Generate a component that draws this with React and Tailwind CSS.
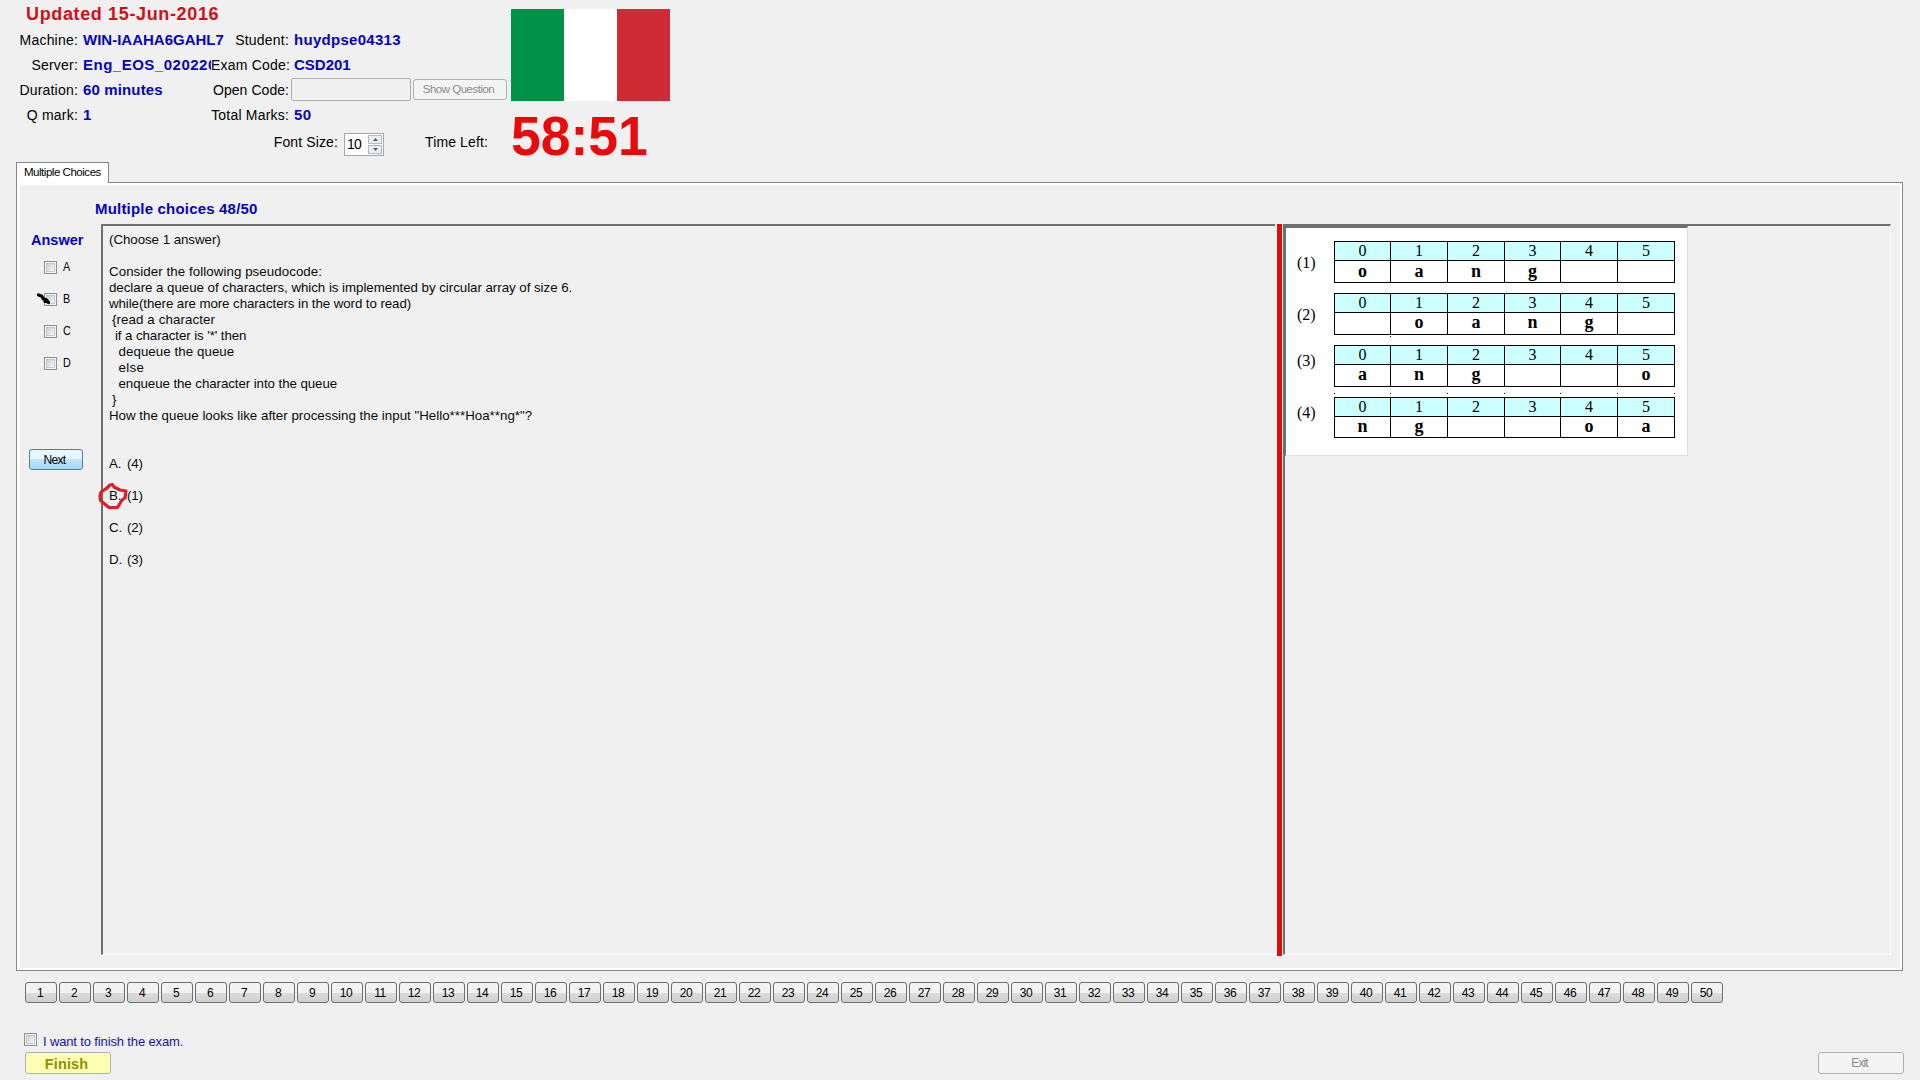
const INFO = [
  [
    { label: "Machine:", value: "WIN-IAAHA6GAHL7" },
    { label: "Student:", value: "huydpse04313", cls: "tracking-[0.28px]" },
  ],
  [
    { label: "Server:", value: "Eng_EOS_020220", cls: "tracking-[0.5px] overflow-hidden" },
    { label: "Exam Code:", value: "CSD201", labelCls: "tracking-[-0.08px]" },
  ],
  [
    { label: "Duration:", value: "60 minutes", cls: "tracking-[0.14px]" },
    { label: "Open Code:", input: true, labelCls: "tracking-[0.05px]" },
  ],
  [
    { label: "Q mark:", value: "1" },
    { label: "Total Marks:", value: "50", cls: "tracking-[0.4px]" },
  ],
];

const QUESTION = [
  ["(Choose 1 answer)", "tracking-[-0.04px]"],
  ["", ""],
  ["Consider the following pseudocode:", "tracking-[0.07px]"],
  ["declare a queue of characters, which is implemented by circular array of size 6.", "tracking-[-0.03px]"],
  ["while(there are more characters in the word to read)", "tracking-[-0.075px]"],
  ["{read a character", "tracking-[0.1px] pl-[3px]"],
  ["if a character is '*' then", "tracking-[-0.09px] pl-[6px]"],
  ["dequeue the queue", "tracking-[0.07px] pl-[9.5px]"],
  ["else", "tracking-[0.3px] pl-[9.5px]"],
  ["enqueue the character into the queue", "tracking-[-0.07px] pl-[9.5px]"],
  ["}", "pl-[3px]"],
  ["How the queue looks like after processing the input \"Hello***Hoa**ng*\"?", "tracking-[0.018px]"],
];

const OPTIONS = [
  ["A.", "(4)"],
  ["B.", "(1)"],
  ["C.", "(2)"],
  ["D.", "(3)"],
];

const ARRAYS = [
  { name: "(1)", cells: ["o", "a", "n", "g", "", ""], head: "h-[19px]", body: "h-[22px]", pos: "pt-[13px]" },
  { name: "(2)", cells: ["", "o", "a", "n", "g", ""], head: "h-[18px]", body: "h-[23px]", pos: "pt-[13px]" },
  { name: "(3)", cells: ["a", "n", "g", "", "", "o"], head: "h-[18px]", body: "h-[23px]", pos: "pt-[7px]" },
  { name: "(4)", cells: ["n", "g", "", "", "o", "a"], head: "h-[18px]", body: "h-[22px]", pos: "pt-[7px]" },
];

const COLS = "grid grid-cols-[56px_57px_57px_56px_57px_57px]";

function CheckBox() {
  return (
    <span className="block h-[13px] w-[13px] shrink-0 border border-[#8e8f8f] bg-[#f4f4f4] p-px">
      <span className="block h-full w-full border border-[#c3c6ca] bg-linear-to-br from-[#cdd0d5] to-[#f6f6f6]" />
    </span>
  );
}

function Field({ item, labelW, valueW }) {
  return (
    <>
      <div className={`${labelW} shrink-0 text-right text-[14px] whitespace-pre text-black tracking-[0.2px] ${item.labelCls || ""}`}>
        {item.label}
      </div>
      {item.input ? (
        <div className="ml-[2px] flex items-center gap-[2px]">
          <div className="h-[23px] w-[120px] rounded-[2px] border border-[#afafaf]" />
          <button className="h-[21px] w-[94px] rounded-[3px] border border-[#adb2b5] bg-[#f4f4f4] pr-[3px] text-[11.5px] leading-[19px] tracking-[-0.5px] whitespace-pre text-[#8b8b8b]">
            Show Question
          </button>
        </div>
      ) : (
        <div className={`${valueW} shrink-0 pl-[5px] text-[15px] font-bold whitespace-pre text-[#0505ba] ${item.cls || ""}`}>
          {item.value}
        </div>
      )}
    </>
  );
}

function Spinner() {
  return (
    <div className="flex h-[23px] w-[40px] border border-[#a5a8ab] bg-white p-px">
      <span className="w-[22px] pl-px text-[14px] leading-[18px] tracking-[-0.8px]">10</span>
      <span className="flex w-[14px] flex-col">
        <span className="flex h-[9px] items-center justify-center border border-[#b3b9c2] bg-[#e9ecf1]">
          <svg width="5" height="3" viewBox="0 0 5 3"><path d="M0 3 2.5 0 5 3Z" fill="#4a5a80" /></svg>
        </span>
        <span className="mt-px flex h-[9px] items-center justify-center border border-[#b3b9c2] bg-[#e9ecf1]">
          <svg width="5" height="3" viewBox="0 0 5 3"><path d="M0 0 2.5 3 5 0Z" fill="#4a5a80" /></svg>
        </span>
      </span>
    </div>
  );
}

function Header() {
  return (
    <header className="flex h-[162px] shrink-0">
      <div className="w-[511px] shrink-0">
        <h1 className="h-[27px] pl-[26px] text-[18px] leading-7 font-bold tracking-[0.64px] whitespace-pre text-[#d00f16]">
          Updated 15-Jun-2016
        </h1>
        {INFO.map(([a, b]) => (
          <div key={a.label} className="flex h-[25px] items-center leading-5">
            <Field item={a} labelW="w-[78px]" valueW="w-[133px]" />
            <Field item={b} labelW="w-[78px]" valueW="w-[160px]" />
          </div>
        ))}
        <div className="flex pt-[5px] text-[14px] leading-5 tracking-[0.12px]">
          <span className="w-[338px] text-right">Font Size:</span>
          <span className="mt-px ml-[6px]"><Spinner /></span>
          <span className="ml-[41px]">Time Left:</span>
        </div>
      </div>
      <div className="pt-[9px]">
        <div className="flex h-[92px] w-[159px]">
          <div className="flex-1 bg-[#009246]" />
          <div className="flex-1 bg-white" />
          <div className="flex-1 bg-[#ce2b37]" />
        </div>
        <div className="mt-[7px] origin-left scale-x-[0.955] text-[56px] leading-[56px] font-bold whitespace-pre text-[#ea0a0c]">
          58:51
        </div>
      </div>
    </header>
  );
}

function AnswerColumn() {
  return (
    <div className="relative w-[81px] shrink-0 pt-[6px] text-black">
      <div className="pl-[11px] text-[14.5px] leading-5 font-bold text-[#0505ba]">Answer</div>
      <div className="pt-[11px] pl-[24px]">
        {["A", "B", "C", "D"].map((l) => (
          <div key={l} className="flex h-8 items-start gap-[6px] text-[12px] leading-[13px]">
            <CheckBox />
            <span className="scale-x-90 origin-left">{l}</span>
          </div>
        ))}
      </div>
      <button className="mt-[60px] ml-[9px] block h-[21px] w-[54px] rounded-[3px] border border-[#4f7f9c] bg-linear-to-b from-[#eaf6fd] from-50% via-[#bee6fd] via-50% to-[#a7d9f5] pr-[3px] text-[12px] leading-[20px] tracking-[-0.7px]">
        Next
      </button>
      <svg className="absolute top-[68px] left-[16px]" width="16" height="14" viewBox="0 0 16 14">
        <path d="M2.5 3 5.500 4 7.500 7 10 7.500 12.500 10.500M9 8V9.500H12" fill="none" stroke="#000" strokeWidth="3.2" strokeLinejoin="round" strokeLinecap="round" />
      </svg>
    </div>
  );
}

function QuestionText() {
  return (
    <div className="relative mb-px w-[1174px] shrink-0 border-t-2 border-b border-l-2 border-[#6f6f6f] border-b-white pt-[6px] pl-[6px] text-[13.3px] leading-4 text-[#0a0a0a]">
      {QUESTION.map(([t, cls], i) => (
        <div key={i} className={`h-4 whitespace-pre ${cls}`}>{t}</div>
      ))}
      <div className="pt-8">
        {OPTIONS.map(([l, t]) => (
          <div key={l} className="flex h-8 whitespace-pre">
            <span className="w-[18px]">{l}</span>
            <span className="tracking-[-0.2px]">{t}</span>
          </div>
        ))}
      </div>
      <svg className="absolute top-[255px] -left-[7px]" width="34" height="32" viewBox="0 0 34 32">
        <path d="M10.500 7.500 14 4 16.500 3.500 18 6 24 9 30 10 29 17 26 19 21.500 26.500 13 26.500 4.500 19.500 4 15 5 11 9.500 8Z" fill="none" stroke="#dc1f28" strokeWidth="3.2" strokeLinejoin="round" />
      </svg>
    </div>
  );
}

function ArrayPicture() {
  return (
    <div className="h-[230px] w-[403px] border-t-2 border-l border-r border-b border-t-[#6f6f6f] border-l-[#6f6f6f] border-r-[#dedede] border-b-[#dedede] bg-white pt-[13px] font-['Liberation_Serif',serif] text-black">
      {ARRAYS.map((a, n) => (
        <div key={a.name} className="flex h-[52px]">
          <div className={`w-[48px] shrink-0 pl-[11px] text-[16px] leading-[18px] ${a.pos}`}>{a.name}</div>
          <div>
            <div className="w-[341px] border-t border-l border-black">
              <div className={`${COLS} ${a.head} text-center text-[16px] leading-[18px]`}>
                {a.cells.map((_, i) => (
                  <div key={i} className="border-r border-b border-black bg-[#ccffff]">{i}</div>
                ))}
              </div>
              <div className={`${COLS} ${a.body} pr-px text-center text-[18px] leading-[20px] font-bold`}>
                {a.cells.map((c, i) => (
                  <div key={i} className="border-r border-b border-black">{c}</div>
                ))}
              </div>
            </div>
            {n === 1 && <div className="mt-px ml-[56px] h-px w-px bg-black" />}
            {n === 2 && (
              <div className="mt-[6px] flex w-[341px]">
                <i className="mr-[55px] h-px w-px bg-black" />
                <i className="mr-[56px] h-px w-px bg-black" />
                <i className="mr-[56px] h-px w-px bg-black" />
                <i className="mr-[55px] h-px w-px bg-black" />
                <i className="mr-[56px] h-px w-px bg-black" />
                <i className="mr-[56px] h-px w-px bg-black" />
                <i className="h-px w-px bg-black" />
              </div>
            )}
          </div>
        </div>
      ))}
    </div>
  );
}

export default function App() {
  return (
    <div className="flex h-[1080px] w-[1920px] flex-col overflow-hidden bg-[#f0f0f0] font-['Liberation_Sans',Arial,sans-serif] text-black">
      <Header />
      <div className="relative z-10 ml-4 h-[21px] w-[93px] shrink-0 border-t border-r border-l border-[#85878c] bg-white pl-[7px] text-[11.5px] leading-[19px] tracking-[-0.47px] whitespace-pre">
        Multiple Choices
      </div>
      <main className="-mt-px ml-4 h-[789px] w-[1887px] shrink-0 border border-[#85878c]">
        <div className="flex h-full flex-col border-t-2 border-r-2 border-b-2 border-l-[3px] border-white">
          <h2 className="h-[39px] shrink-0 pt-[14px] pl-[75px] text-[15px] leading-5 font-bold tracking-[0.19px] whitespace-pre text-[#0505ba]">
            Multiple choices 48/50
          </h2>
          <div className="flex h-[732px]">
            <AnswerColumn />
            <QuestionText />
            <div className="ml-[2px] w-[5px] shrink-0 bg-[#e00c0a]" />
            <div className="mb-px ml-px w-[608px] shrink-0 border-t-2 border-r border-b border-l-2 border-t-[#6f6f6f] border-r-white border-b-white border-l-[#6f6f6f]">
              <ArrayPicture />
            </div>
          </div>
        </div>
      </main>
      <nav className="mt-[11px] ml-[25px] flex shrink-0 gap-[2px]">
        {Array.from({ length: 50 }, (_, i) => (
          <button key={i} className="h-[21px] w-[32px] rounded-[3px] border border-[#707070] bg-linear-to-b from-[#f2f2f2] from-50% via-[#dddddd] via-50% to-[#cfcfcf] pr-[2px] text-[12px] leading-[20px] tracking-[-0.5px]">
            {i + 1}
          </button>
        ))}
      </nav>
      <footer className="mt-[30px] px-6">
        <label className="flex h-[19px] items-start text-[13px] leading-[18px] tracking-[-0.14px] whitespace-pre text-[#1414a8]">
          <CheckBox />
          <span className="ml-[6px]">I want to finish the exam.</span>
        </label>
        <div className="flex w-[1880px] justify-between pl-px">
          <button className="h-[22px] w-[86px] rounded-[3px] border border-[#adb2b5] bg-[#ffffb4] pr-[3px] text-[14.5px] leading-[22px] font-bold tracking-[0.1px] text-[#8f8f00]">
            Finish
          </button>
          <button className="h-[22px] w-[86px] rounded-[3px] border border-[#adb2b5] bg-[#f4f4f4] pr-[3px] text-[12px] leading-[20px] tracking-[-0.9px] text-[#8b8b8b]">
            Exit
          </button>
        </div>
      </footer>
    </div>
  );
}
